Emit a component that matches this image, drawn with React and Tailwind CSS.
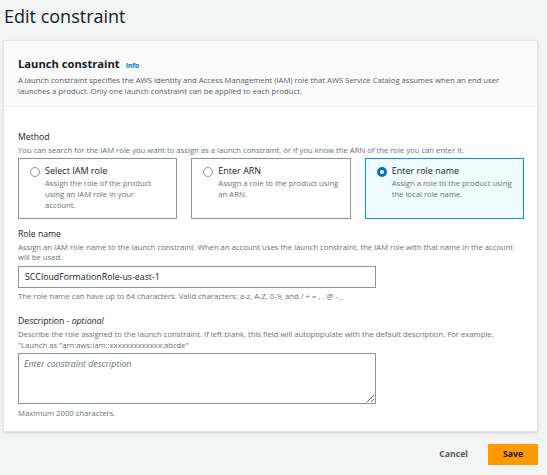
import { useState } from "react";

const methods = [
  {
    id: "select",
    title: "Select IAM role",
    desc: "Assign the role of the product using an IAM role in your account.",
  },
  {
    id: "arn",
    title: "Enter ARN",
    desc: "Assign a role to the product using an ARN.",
  },
  {
    id: "name",
    title: "Enter role name",
    desc: "Assign a role to the product using the local role name.",
  },
];

function Radio({ checked }) {
  return checked ? (
    <span className="mt-[2px] h-[10px] w-[10px] shrink-0 rounded-full border-[3px] border-[#0073bb] bg-white" />
  ) : (
    <span className="mt-[2px] h-[10px] w-[10px] shrink-0 rounded-full border border-[#879596] bg-white" />
  );
}

export default function App() {
  const [method, setMethod] = useState("name");
  const [role, setRole] = useState("SCCloudFormationRole-us-east-1");

  return (
    <div className="min-h-screen bg-[#f2f3f3] font-['Open_Sans',sans-serif] text-[#16191f]">
      <h1 className="pl-[4px] pt-[3px] text-[18px] leading-[26px]">Edit constraint</h1>

      <div className="ml-[3px] mt-[11px] w-[535px] border border-[#e0e3e3] bg-white shadow-sm">
        {/* header */}
        <div className="border-b border-[#eaeded] bg-[#fafafa] px-[14px] pb-[9px] pt-[15px]">
          <div className="flex items-baseline gap-[6px]">
            <h2 className="text-[11.2px] font-bold leading-[16px]">Launch constraint</h2>
            <a className="text-[6.8px] font-bold text-[#0073bb]">Info</a>
          </div>
          <p className="mt-[3px] text-[7.7px] leading-[11px] text-[#545b64]">
            A launch constraint specifies the AWS Identity and Access Management (IAM) role that AWS Service Catalog assumes when an end user launches a product. Only one launch constraint can be applied to each product.
          </p>
        </div>

        {/* body */}
        <div className="px-[14px] pb-[13px] pt-[24px]">
          <div className="text-[8.7px] leading-[12px]">Method</div>
          <p className="mt-[2px] text-[7.7px] leading-[10px] text-[#687078]">
            You can search for the IAM role you want to assign as a launch constraint, or if you know the ARN of the role you can enter it.
          </p>
          <div className="mt-[3px] grid w-[506px] grid-cols-3 gap-[14px]">
            {methods.map((m) => {
              const on = method === m.id;
              return (
                <button
                  key={m.id}
                  onClick={() => setMethod(m.id)}
                  className={
                    on
                      ? "flex h-[61px] gap-[5px] border border-[#00a1c9] bg-[#f1faff] px-[11px] pt-[6px] text-left"
                      : "flex h-[61px] gap-[5px] border border-[#879596] bg-white px-[11px] pt-[6px] text-left"
                  }
                >
                  <Radio checked={on} />
                  <div>
                    <div className="text-[9px] leading-[12px]">{m.title}</div>
                    <div className="mt-[1px] text-[7.7px] leading-[11px] text-[#687078]">{m.desc}</div>
                  </div>
                </button>
              );
            })}
          </div>

          <div className="mt-[9px] text-[8.7px] leading-[12px]">Role name</div>
          <p className="mt-[2px] text-[7.7px] leading-[10px] text-[#687078]">
            Assign an IAM role name to the launch constraint. When an account uses the launch constraint, the IAM role with that name in the account will be used.
          </p>
          <input
            value={role}
            onChange={(e) => setRole(e.target.value)}
            className="mt-[3px] h-[22px] w-[358px] border border-[#879596] bg-white px-[6px] text-[8.8px] text-[#16191f] outline-none"
          />
          <p className="mt-[3px] text-[7.7px] leading-[10px] text-[#687078]">
            The role name can have up to 64 characters. Valid characters: a-z, A-Z, 0-9, and / + = , . @ - _
          </p>

          <div className="mt-[14px] text-[8.7px] leading-[12px]">
            Description - <i>optional</i>
          </div>
          <p className="mt-[2px] text-[7.7px] leading-[11px] text-[#687078]">
            Describe the role assigned to the launch constraint. If left blank, this field will autopopulate with the default description. For example, "Launch as "arn:aws:iam::xxxxxxxxxxxxx:abcde"
          </p>
          <textarea
            placeholder="Enter constraint description"
            className="mt-[2px] block h-[51px] w-[358px] border border-[#879596] bg-white px-[5px] py-[4px] text-[8.8px] italic text-[#16191f] outline-none placeholder:text-[#687078]"
          />
          <p className="mt-[4px] text-[7.7px] leading-[10px] text-[#687078]">Maximum 2000 characters.</p>
        </div>
      </div>

      <div className="flex items-center justify-end gap-[20px] pr-[9px] pt-[12px]">
        <button className="text-[8.7px] font-bold text-[#545b64]">Cancel</button>
        <button className="h-[21px] w-[50px] bg-[#ff9900] text-[8.7px] font-bold text-[#16191f]">Save</button>
      </div>
    </div>
  );
}
